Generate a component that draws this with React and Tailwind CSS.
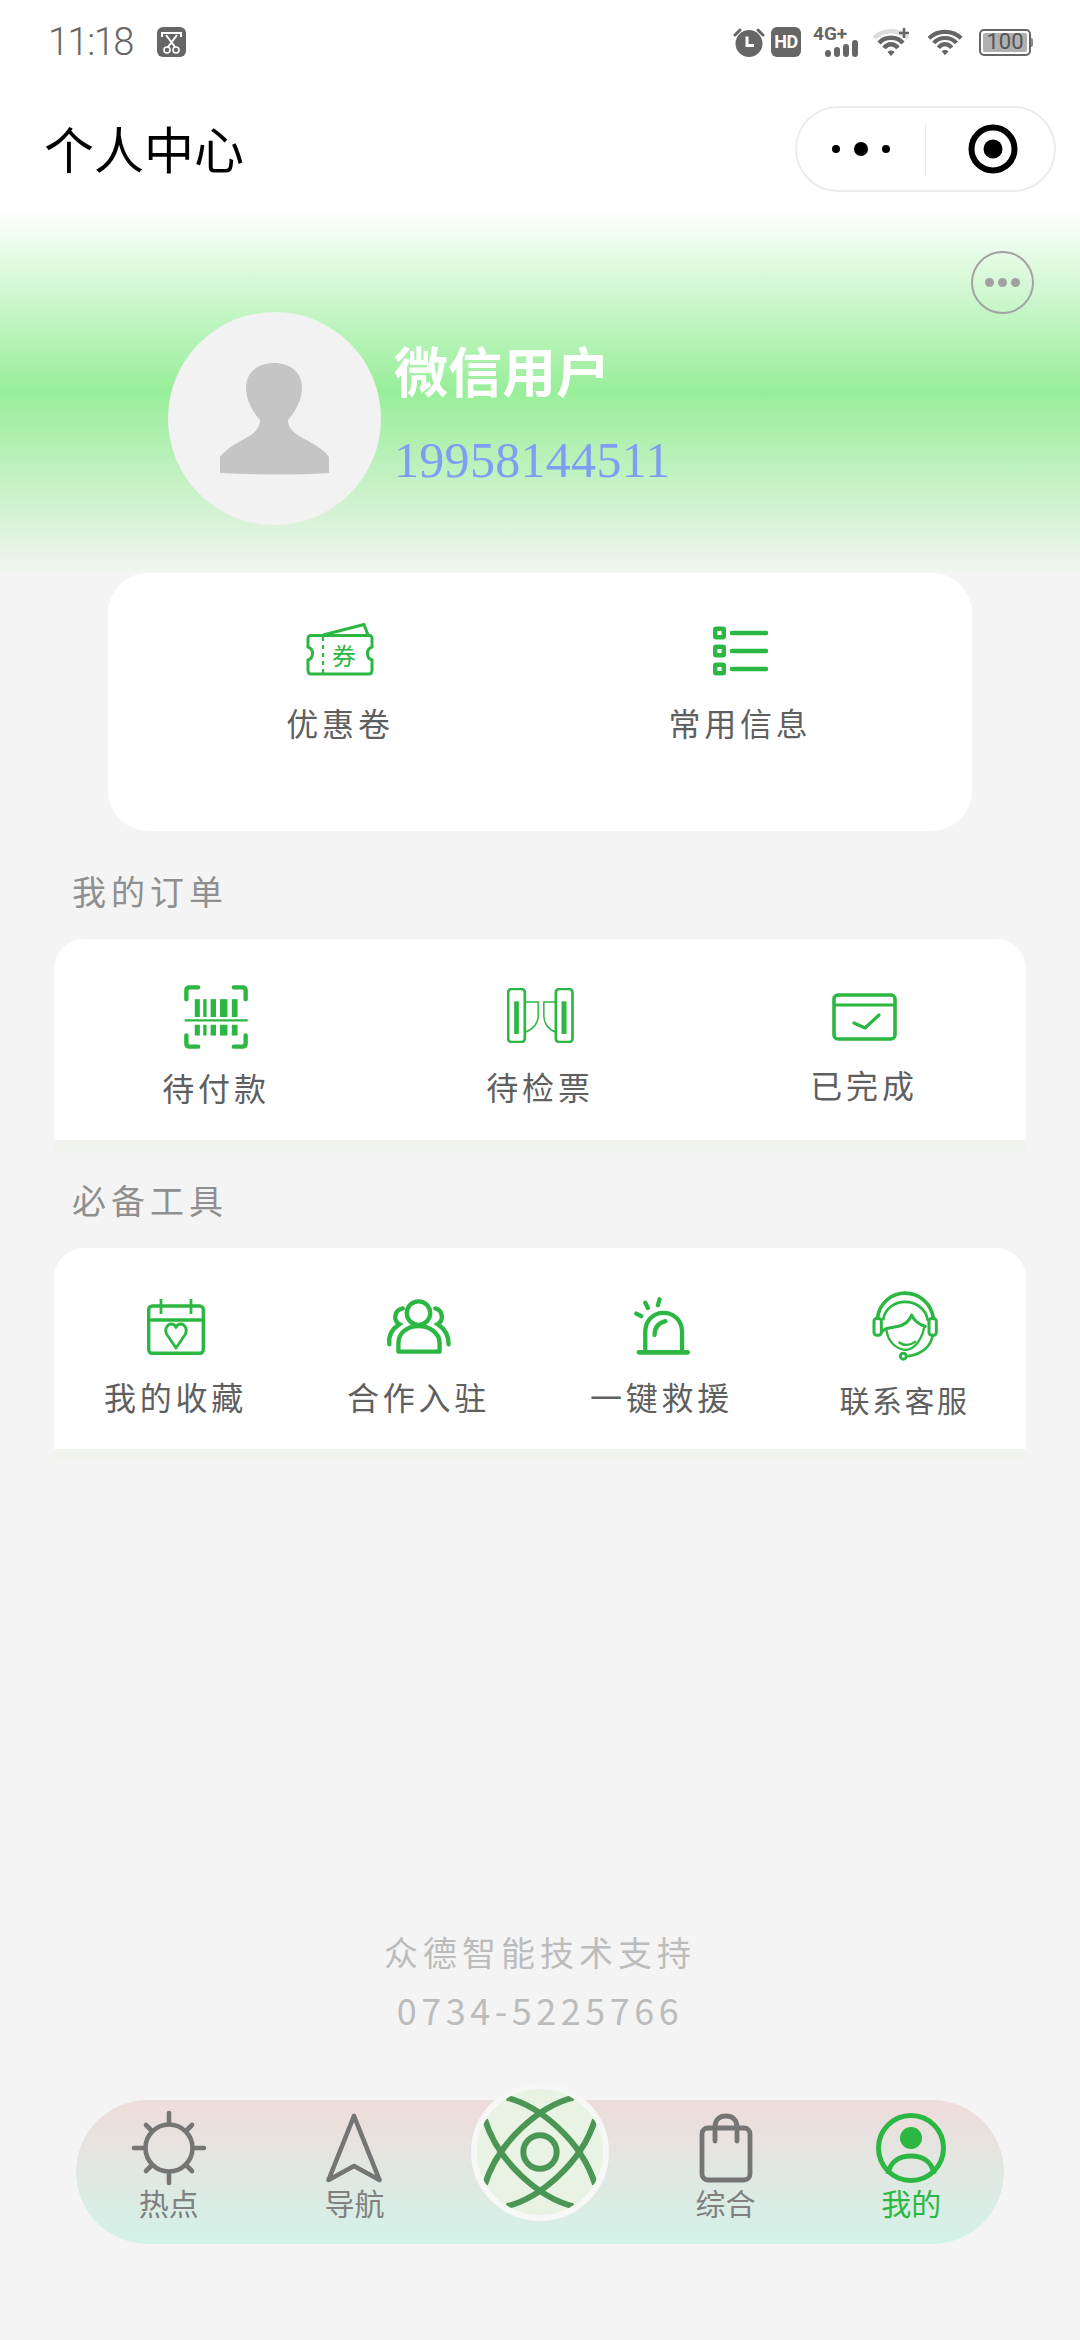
const G = "#2bb741";

function Alarm() {
  return (
    <svg width="32" height="30" viewBox="0 0 32 30" fill="none">
      <circle cx="16" cy="16.5" r="13.5" fill="#666" />
      <path d="M2 8 L7 3 M30 8 L25 3" stroke="#666" strokeWidth="3" strokeLinecap="round" />
      <path d="M14 9.5 V18.5 H21" stroke="#fff" strokeWidth="3" fill="none" />
    </svg>
  );
}

function WifiArcs({ plus }) {
  return (
    <svg width={plus ? 38 : 36} height="30" viewBox="0 0 38 30" fill="none">
      <path d="M1 11 C10 2 26 2 35 11" stroke={plus ? "#ddd" : "#666"} strokeWidth="4.4" />
      <path d="M6 16 C12 9 24 9 30 16" stroke="#666" strokeWidth="4.4" />
      <path d="M11 21 C15 16 21 16 25 21" stroke="#666" strokeWidth="4.4" />
      <path d="M14.5 25 L18 29 L21.5 25 C19.5 23 16.5 23 14.5 25 Z" fill="#666" />
      {plus && <path d="M31 1 V11 M26 6 H36" stroke="#666" strokeWidth="2.6" />}
    </svg>
  );
}

function Signal() {
  return (
    <div className="relative w-[47px] h-[30px]">
      <span className="absolute left-0 top-[-4px] text-[19px] leading-[22px] font-bold text-[#666] font-['Roboto',sans-serif]">4G+</span>
      <svg className="absolute left-[11px] bottom-0" width="36" height="18" viewBox="0 0 36 18">
        <rect x="1" y="11" width="6" height="7" rx="3" fill="#666" />
        <rect x="10" y="8" width="6" height="10" rx="3" fill="#666" />
        <rect x="19" y="5" width="6" height="13" rx="3" fill="#666" />
        <rect x="28" y="1" width="6" height="17" rx="3" fill="#666" />
      </svg>
    </div>
  );
}

function Battery() {
  return (
    <div className="flex items-center">
      <div className="relative w-[52px] h-[27px] rounded-[5px] border-2 border-[#666] p-[2px]">
        <div className="w-full h-full rounded-[2px] bg-[#b0b0b0]" />
        <span className="absolute inset-0 flex items-center justify-center text-[22px] leading-none text-[#555] font-['Roboto',sans-serif]">100</span>
      </div>
      <div className="w-[2px] h-[9px] bg-[#888] rounded-r-sm" />
    </div>
  );
}

function StatusBar() {
  return (
    <div className="h-[84px] flex items-center justify-between pl-[48px] pr-[47px]">
      <div className="flex items-center gap-[24px]">
        <span className="text-[38px] leading-none font-light tracking-[-1.5px] text-[#666] font-['Roboto',sans-serif]">11:18</span>
        <svg width="29" height="30" viewBox="0 0 29 30">
          <rect width="29" height="30" rx="6" fill="#666" />
          <path d="M5 10 V6 H24 V10" stroke="#fff" strokeWidth="2" fill="none" />
          <path d="M9 8 L18 20 M20 8 L11 20" stroke="#fff" strokeWidth="2" />
          <circle cx="10" cy="23" r="3" stroke="#fff" strokeWidth="1.6" fill="none" />
          <circle cx="19" cy="23" r="3" stroke="#fff" strokeWidth="1.6" fill="none" />
        </svg>
      </div>
      <div className="flex items-center">
        <Alarm />
        <div className="ml-[6px] w-[30px] h-[30px] rounded-[6px] bg-[#666] flex items-center justify-center text-[18px] leading-none font-bold tracking-[-0.5px] text-white font-['Roboto',sans-serif]">HD</div>
        <div className="ml-[12px]"><Signal /></div>
        <div className="ml-[13px]"><WifiArcs plus /></div>
        <div className="ml-[17px]"><WifiArcs /></div>
        <div className="ml-[15px]"><Battery /></div>
      </div>
    </div>
  );
}

function Header() {
  return (
    <div className="h-[126px] flex items-center justify-between pl-[44px] pr-[24px] pt-[4px]">
      <h1 className="text-[50px] leading-[70px] font-normal text-black -mt-[5px]">个人中心</h1>
      <div className="w-[261px] h-[86px] rounded-full border-2 border-[#ececec] flex items-center">
        <div className="w-[128px] flex items-center justify-center">
          <svg width="60" height="16" viewBox="0 0 60 16">
            <circle cx="5" cy="8" r="4" fill="#000" />
            <circle cx="30" cy="8" r="7" fill="#000" />
            <circle cx="55" cy="8" r="4" fill="#000" />
          </svg>
        </div>
        <div className="w-[1px] h-[52px] bg-[#ececec]" />
        <div className="flex-1 flex items-center justify-center pl-[5px]">
          <svg width="50" height="50" viewBox="0 0 50 50">
            <circle cx="25" cy="25" r="21.5" stroke="#000" strokeWidth="6" fill="none" />
            <circle cx="25" cy="25" r="9.5" fill="#000" />
          </svg>
        </div>
      </div>
    </div>
  );
}

function Hero() {
  return (
    <div className="relative h-[363px] pt-[102px] pl-[168px] flex items-start bg-[linear-gradient(180deg,#ffffff_0%,#98ee99_50%,#f2f5f1_100%)]">
      <div className="w-[213px] h-[213px] rounded-full bg-[#f2f2f2] shrink-0">
        <svg width="213" height="213" viewBox="0 0 213 213">
          <path
            d="M52 161 V145 C66 127 92 126 92 108 C83 98 78 86 78 76 C78 60 90 51 106 51 C122 51 134 60 134 76 C134 86 129 98 120 108 C120 126 148 127 161 145 V161 C125 163 88 163 52 161 Z"
            fill="#c5c5c5"
          />
        </svg>
      </div>
      <div className="ml-[13px] mt-[25px] flex flex-col">
        <span className="text-[54px] leading-[66px] font-bold text-white">微信用户</span>
        <span className="mt-[27px] text-[50px] leading-[60px] tracking-[0.3px] text-[#7f9df2] font-['Liberation_Serif',serif]">19958144511</span>
      </div>
      <div className="absolute left-[971px] top-[41px] w-[63px] h-[63px] rounded-full border-[2.5px] border-[#a3a3a3] flex items-center justify-center gap-[4px]">
        <span className="w-[9px] h-[9px] rounded-full bg-[#a0a0a0]" />
        <span className="w-[9px] h-[9px] rounded-full bg-[#a0a0a0]" />
        <span className="w-[9px] h-[9px] rounded-full bg-[#a0a0a0]" />
      </div>
    </div>
  );
}

function TicketIcon() {
  return (
    <svg width="68" height="53" viewBox="0 0 68 53" fill="none" stroke={G}>
      <path d="M2 16 C2 13 3 12.5 5 12.5 H63 C65 12.5 66 13 66 16 V24 C60 26 60 35 66 37 V47 C66 50 65 51 63 51 H5 C3 51 2 50 2 47 V37 C8 35 8 26 2 24 Z" strokeWidth="3" />
      <path d="M17 12 L58 1.5 L62 12" strokeWidth="3" strokeLinejoin="round" />
      <path d="M17 14 V50" strokeWidth="2.2" strokeDasharray="4 4" />
      <text x="38" y="42" textAnchor="middle" fontSize="24" fill={G} stroke="none" fontFamily="'Noto Sans CJK SC',sans-serif">券</text>
    </svg>
  );
}

function ListIcon() {
  return (
    <svg width="55" height="50" viewBox="0 0 55 50" fill="none" stroke={G}>
      {[7, 25, 43].map((y) => (
        <g key={y}>
          <rect x="2.2" y={y - 4.3} width="8.6" height="8.6" rx="1" strokeWidth="4.4" />
          <path d={`M19 ${y} H53`} strokeWidth="4.6" strokeLinecap="round" />
        </g>
      ))}
    </svg>
  );
}

function BarcodeIcon() {
  return (
    <svg className="mt-[46px]" width="64" height="64" viewBox="43 30 190 190" fill="none">
      <path d="M50 72 V46 C50 40 54 37 60 37 H85 M226 72 V46 C226 40 222 37 216 37 H191 M50 180 V204 C50 210 54 213 60 213 H85 M226 180 V204 C226 210 222 213 216 213 H191" stroke={G} strokeWidth="13" strokeLinecap="round" />
      <path d="M45 135 H232" stroke={G} strokeWidth="6" />
      {[[75, 15], [100, 10], [122, 16], [150, 22], [185, 17]].map(([x, w]) => (
        <g key={x} fill={G}>
          <rect x={x} y="72" width={w} height="53" />
          <rect x={x} y="148" width={w} height="32" />
        </g>
      ))}
    </svg>
  );
}

function GateIcon() {
  return (
    <svg className="mt-[49px]" width="67" height="55" viewBox="1012 40 200 165" fill="none" stroke={G}>
      <rect x="1015" y="43" width="50" height="159" rx="10" strokeWidth="8" />
      <rect x="1158" y="43" width="50" height="159" rx="10" strokeWidth="8" />
      <rect x="1033" y="80" width="14" height="98" fill={G} stroke="none" />
      <rect x="1175" y="80" width="15" height="98" fill={G} stroke="none" />
      <path d="M1066 82 H1105 V125 C1105 145 1090 165 1066 172" strokeWidth="4.5" />
      <path d="M1157 82 H1122 V125 C1122 145 1135 165 1157 172" strokeWidth="4.5" />
    </svg>
  );
}

function DoneIcon() {
  return (
    <svg className="mt-[54px]" width="65" height="48" viewBox="0 0 65 48" fill="none" stroke={G}>
      <rect x="2" y="2" width="61" height="44" rx="4" strokeWidth="3.6" />
      <path d="M2 12 H63" strokeWidth="3.2" />
      <path d="M22 30 L33 35 L47 22" strokeWidth="3.2" strokeLinecap="round" strokeLinejoin="round" />
    </svg>
  );
}

function CalendarIcon() {
  return (
    <svg className="mt-[51px]" width="58" height="56" viewBox="0 0 58 56" fill="none" stroke={G}>
      <rect x="1.7" y="7" width="54.6" height="47.3" rx="3.5" strokeWidth="3.4" />
      <path d="M1.5 21 H56.5" strokeWidth="3.4" />
      <path d="M14 0 V15 M44 0 V15" strokeWidth="2.8" />
      <path d="M29 49 L19.5 35 C17 29 21 25 24.5 25 C27 25 28.4 26.5 29 28.5 C29.6 26.5 31 25 33.5 25 C37 25 41 29 38.5 35 Z" strokeWidth="2.8" strokeLinejoin="round" />
    </svg>
  );
}

function PeopleIcon() {
  return (
    <svg className="mt-[51px]" width="67" height="57" viewBox="15 20 200 170" fill="none" stroke={G} strokeWidth="13" strokeLinecap="round">
      <circle cx="115" cy="62" r="35" />
      <path d="M55 177 V152 C55 122 80 101 115 101 C150 101 178 122 178 152 V177 Z" strokeLinejoin="round" />
      <path d="M68 48 C40 55 40 85 58 95 C35 110 25 130 28 155" />
      <path d="M165 48 C190 55 190 85 172 95 C195 110 205 130 205 155" />
    </svg>
  );
}

function SirenIcon() {
  return (
    <svg className="mt-[49px]" width="58" height="58" viewBox="760 20 175 175" fill="none" stroke={G} strokeWidth="13" strokeLinecap="round">
      <path d="M797 185 V125 C797 90 822 68 852 68 C882 68 908 90 908 125 V185" />
      <path d="M778 187 H925" strokeWidth="14" />
      <path d="M825 135 C825 112 838 98 858 93" />
      <path d="M770 70 L785 78 M797 37 L805 53 M840 27 L835 45" />
    </svg>
  );
}

function HeadsetIcon() {
  return (
    <svg className="mt-[42px]" width="70" height="72" viewBox="30 15 210 215" fill="none" stroke={G} strokeWidth="8" strokeLinecap="round" strokeLinejoin="round">
      <path d="M52 100 C58 50 98 24 135 24 C175 24 214 52 220 100" strokeWidth="11" />
      <path d="M70 102 C76 66 108 50 135 50 C166 50 198 70 203 104" strokeWidth="8" />
      <rect x="42" y="100" width="22" height="50" rx="8" strokeWidth="9" />
      <rect x="207" y="100" width="22" height="50" rx="8" strokeWidth="9" />
      <path d="M66 140 C72 128 90 128 112 124 C135 120 148 108 155 90 C164 110 178 118 196 124" strokeWidth="9" />
      <path d="M80 138 C84 168 108 192 135 194 C160 194 182 170 192 130" strokeWidth="7" />
      <path d="M218 150 C214 180 190 206 146 213" strokeWidth="8" />
      <circle cx="130" cy="213" r="9" strokeWidth="9" />
      <path d="M118 172 C130 182 150 182 165 170" strokeWidth="7" />
    </svg>
  );
}

function Section({ title, cols, children, titleClass }) {
  return (
    <div>
      <div className={`${titleClass} ml-[72px] mb-[24px] text-[34px] leading-[48px] tracking-[5px] text-[#8f8f8f]`}>{title}</div>
      <div className="mx-[54px]">
        <div className={`${cols} h-[201px] bg-white rounded-t-[30px] grid`}>{children}</div>
        <div className="h-[12px] bg-[#f1f3ee]" />
      </div>
    </div>
  );
}

function Item({ icon, label, labelClass }) {
  return (
    <div className="flex flex-col items-center">
      {icon}
      <span className={labelClass}>{label}</span>
    </div>
  );
}

const base = "text-[32px] leading-[44px] tracking-[3.8px] text-[#5f5f5f] ";

function SunIcon() {
  return (
    <svg width="76" height="76" viewBox="-38 -38 76 76" fill="none" stroke="#757575" strokeWidth="4.6" strokeLinecap="round">
      <circle r="23.5" />
      <path d="M0 -35 V-25 M0 35 V25 M-35 0 H-25 M35 0 H25 M-23 -23 L-17 -17 M23 -23 L17 -17 M-23 23 L-17 17 M23 23 L17 17" />
    </svg>
  );
}

function ArrowIcon() {
  return (
    <svg width="58" height="72" viewBox="0 0 58 72" fill="none" stroke="#757575" strokeWidth="4.6" strokeLinejoin="round">
      <path d="M29 4 L3.5 68 L29 54 L54.5 68 Z" />
    </svg>
  );
}

function BagIcon() {
  return (
    <svg width="54" height="70" viewBox="0 0 54 70" fill="none" stroke="#757575" strokeWidth="4.8">
      <rect x="3" y="15" width="48" height="52" rx="6" />
      <path d="M16 28 V14 C16 6 21 3 27 3 C33 3 38 6 38 14 V28" strokeLinecap="round" />
    </svg>
  );
}

function MeIcon() {
  return (
    <svg width="72" height="72" viewBox="0 0 72 72" fill="none">
      <circle cx="36" cy="36" r="32.5" stroke={G} strokeWidth="5" />
      <circle cx="36" cy="26" r="11" fill={G} />
      <path d="M13 62 C15 50 24 44 36 44 C48 44 57 50 59 62" stroke={G} strokeWidth="5" />
    </svg>
  );
}

function NavItem({ icon, label, active }) {
  return (
    <div className="flex flex-col items-center pt-[12px]">
      <div className="h-[72px] flex items-center justify-center">{icon}</div>
      <span className={`-mt-[1px] text-[30px] leading-[38px] ${active ? "text-[#2bb741]" : "text-[#808080]"}`}>{label}</span>
    </div>
  );
}

function NavBar() {
  return (
    <div className="relative mx-[76px] h-[144px] rounded-full bg-[linear-gradient(180deg,#efdcdc_0%,#d3f2e8_100%)] grid grid-cols-5">
      <NavItem icon={<SunIcon />} label="热点" />
      <NavItem icon={<ArrowIcon />} label="导航" />
      <div />
      <NavItem icon={<BagIcon />} label="综合" />
      <NavItem icon={<MeIcon />} label="我的" active />
      <div className="absolute left-[395px] top-[-17px] w-[138px] h-[138px] rounded-full bg-[#e8f3e3] border-[6px] border-[#f6f7f6] overflow-hidden">
        <svg className="-ml-[6px] -mt-[6px]" width="138" height="138" viewBox="33 21 414 414" fill="none" stroke="#4b9655" strokeWidth="18">
          <circle cx="240" cy="228" r="50" />
          <path d="M140 65 C240 90 365 195 405 325" />
          <path d="M340 65 C240 90 115 195 75 325" />
          <path d="M75 131 C115 261 240 366 340 391" />
          <path d="M405 131 C365 261 240 366 140 391" />
        </svg>
      </div>
    </div>
  );
}

export default function App() {
  return (
    <div className="w-[1080px] h-[2340px] overflow-hidden bg-[#f4f4f4] font-['Noto_Sans_CJK_SC',sans-serif]">
      <div className="bg-white">
        <StatusBar />
        <Header />
      </div>
      <Hero />
      <div className="mx-[108px] h-[258px] rounded-[40px] bg-white px-[32px] grid grid-cols-2">
        <div className="flex flex-col items-center pt-[50px]">
          <TicketIcon />
          <span className={base + "mt-[24px]"}>优惠卷</span>
        </div>
        <div className="flex flex-col items-center pt-[53px]">
          <ListIcon />
          <span className={base + "mt-[24px]"}>常用信息</span>
        </div>
      </div>
      <Section title="我的订单" cols="grid-cols-3" titleClass="mt-[36px]">
        <Item icon={<BarcodeIcon />} label="待付款" labelClass={base + "mt-[16px]"} />
        <Item icon={<GateIcon />} label="待检票" labelClass={base + "mt-[21px]"} />
        <Item icon={<DoneIcon />} label="已完成" labelClass={base + "mt-[21px]"} />
      </Section>
      <Section title="必备工具" cols="grid-cols-4" titleClass="mt-[24px]">
        <Item icon={<CalendarIcon />} label="我的收藏" labelClass={base + "mt-[19px]"} />
        <Item icon={<PeopleIcon />} label="合作入驻" labelClass={base + "mt-[18px]"} />
        <Item icon={<SirenIcon />} label="一键救援" labelClass={base + "mt-[19px]"} />
        <Item icon={<HeadsetIcon />} label="联系客服" labelClass="mt-[17px] text-[30px] leading-[40px] tracking-[2.5px] text-[#5f5f5f]" />
      </Section>
      <div className="mt-[467px] flex flex-col items-center text-[#bcbcbc]">
        <span className="text-[34px] leading-[48px] tracking-[5px]">众德智能技术支持</span>
        <span className="mt-[9px] text-[36px] leading-[48px] tracking-[4.5px]">0734-5225766</span>
      </div>
      <div className="mt-[67px]">
        <NavBar />
      </div>
    </div>
  );
}
